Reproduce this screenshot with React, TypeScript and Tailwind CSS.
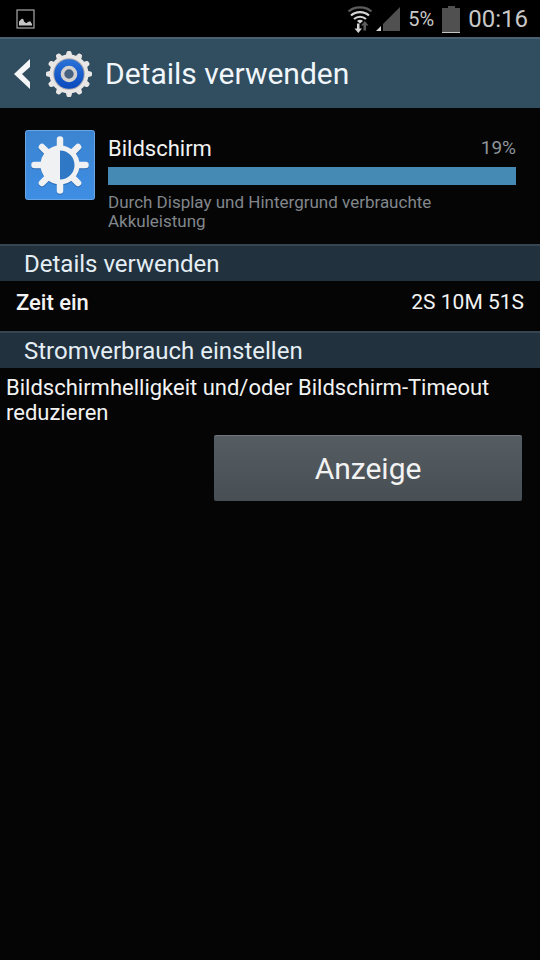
import React from 'react';

interface SectionHeaderProps {
  title: string;
}

const TEETH = [0, 30, 60, 90, 120, 150, 180, 210, 240, 270, 300, 330];
const RAYS = [0, 45, 90, 135, 180, 225, 270, 315];

const PictureIcon = () => (
  <svg className="w-5 h-5" viewBox="0 0 20 20" fill="none">
    <rect x="1" y="1" width="17" height="18" stroke="#a8a8a8" strokeWidth="1.2" />
    <path d="M3 16.500v-4l2-2 1-1 1.500 1 .5 2 2 1.500h1l1-1.500 1 .5 1-1 2 3v1.500z" fill="#c4c4c4" />
  </svg>
);

const WifiIcon = () => (
  <svg className="w-7 h-7" viewBox="0 0 28 28" fill="none">
    <path d="M2.500 6.500c6-5.500 17-5.500 23 0" stroke="#5c5c5c" strokeWidth="2.200" />
    <path d="M5 10.500c5-4.500 13-4.500 18 0" stroke="#d6d6d6" strokeWidth="2.200" />
    <path d="M8 14c3.500-3 8.500-3 12 0" stroke="#d6d6d6" strokeWidth="2.200" />
    <path d="M11 16q3-2.500 6 0l-3 2.500z" fill="#d6d6d6" />
    <path d="M11 18.500h2.500v5h2.500l-3.700 4.500-3.800-4.500H11z" fill="#d6d6d6" />
    <path d="M17.500 25.500v-5H15l3.800-4.500 3.700 4.500H20v5z" fill="#5c5c5c" />
  </svg>
);

const SignalIcon = () => (
  <svg className="w-6 h-6" viewBox="0 0 24 24">
    <path d="M24 0v24H7V17z" fill="#505050" />
    <path d="M5 19v5H0z" fill="#d6d6d6" />
  </svg>
);

const BatteryIcon = () => (
  <svg className="w-[18px] h-7" viewBox="0 0 18 28">
    <path d="M6 1h7v2h5v25H0V3h6z" fill="#505050" />
    <rect y="27" width="18" height="1" fill="#c4c4c4" />
  </svg>
);

const GearIcon = () => (
  <svg className="w-12 h-12" viewBox="0 0 48 48">
    <defs>
      <linearGradient id="gearRing" x1="0" y1="0" x2="0" y2="1">
        <stop offset="0" stopColor="#2a72d8" />
        <stop offset="1" stopColor="#0a49bd" />
      </linearGradient>
    </defs>
    <g fill="#e9e7e5">
      {TEETH.map((angle) => (
        <path key={angle} d="M20.500 7l1-4.500q.3-1.500 1.500-1.500h2q1.200 0 1.500 1.500l1 4.500z" transform={`rotate(${angle} 24 24)`} />
      ))}
      <circle cx="24" cy="24" r="19.500" />
    </g>
    <circle cx="24" cy="24" r="15.800" fill="#a9a9ae" />
    <circle cx="24" cy="24" r="14.800" fill="url(#gearRing)" />
    <circle cx="24" cy="24" r="6.500" fill="#46607f" stroke="#d3d1cf" strokeWidth="3.600" />
  </svg>
);

const BrightnessIcon = () => (
  <svg className="w-[70px] h-[70px] shrink-0" viewBox="0 0 70 70">
    <defs>
      <linearGradient id="tile" x1="0" y1="0" x2="0" y2="1">
        <stop offset="0" stopColor="#3b84d0" />
        <stop offset="1" stopColor="#3e8ee4" />
      </linearGradient>
    </defs>
    <rect x="0.500" y="0.500" width="69" height="69" rx="2" fill="url(#tile)" stroke="#68a6e6" />
    <g transform="translate(0 1)" fill="none" stroke="#1d5596" strokeWidth="6.500" strokeLinecap="round" opacity="0.6">
      {RAYS.map((angle) => (
        <path key={angle} d="M35 9.500v8" transform={`rotate(${angle} 35 35)`} />
      ))}
      <circle cx="35" cy="35" r="17" strokeWidth="5" />
    </g>
    <g stroke="#f0f1f2" strokeWidth="6.500" strokeLinecap="round">
      {RAYS.map((angle) => (
        <path key={angle} d="M35 9.500v8" transform={`rotate(${angle} 35 35)`} />
      ))}
    </g>
    <circle cx="35" cy="35" r="17" fill="#2f78c6" stroke="#f0f1f2" strokeWidth="5" />
    <path d="M35 17a18 18 0 0 0 0 36z" fill="#f0f1f2" />
  </svg>
);

const SectionHeader: React.FC<SectionHeaderProps> = ({ title }) => (
  <h2 className="border-t-2 border-[#36454f] bg-[#21313d] px-6 pt-[2px] pb-px text-2xl leading-8 text-[#e4eef4]">{title}</h2>
);

const App: React.FC = () => {
  return (
    <div className="min-h-screen bg-[#050505] font-['Roboto','Noto_Sans',sans-serif] text-[#f2f2f2]">
      <div className="flex h-[37px] items-center bg-black pl-4 pr-3">
        <PictureIcon />
        <div className="ml-auto flex items-center gap-2 text-[#c8c8c8]">
          <div className="flex items-center gap-[2px]">
            <WifiIcon />
            <SignalIcon />
          </div>
          <span className="text-xl">5%</span>
          <BatteryIcon />
          <span className="text-2xl">00:16</span>
        </div>
      </div>

      <header className="flex h-[71px] items-center border-t-2 border-[#4a6070] bg-[#314d60] pl-3">
        <button type="button" aria-label="Zurück" className="flex items-center">
          <svg className="w-5 h-8" viewBox="0 0 20 32">
            <path d="M18 1v8l-8 7 8 8v7L2 16z" fill="#f4f6f8" />
          </svg>
        </button>
        <span className="ml-[13px]"><GearIcon /></span>
        <h1 className="ml-3 text-[30px] leading-9 text-[#f0f6fa]">Details verwenden</h1>
      </header>

      <main>
        <section className="flex h-[136px] gap-[13px] pl-[25px] pr-6 pt-[22px]">
          <BrightnessIcon />
          <div className="min-w-0 flex-1">
            <div className="flex items-center justify-between">
              <h2 className="text-[22px] leading-[37px]">Bildschirm</h2>
              <span className="text-[19px] text-[#8f959a]">19%</span>
            </div>
            <div className="h-[18px] bg-[#458ab5]" />
            <p className="mt-2 text-[17px] leading-[19px] text-[#81878c]">Durch Display und Hintergrund verbrauchte Akkuleistung</p>
          </div>
        </section>

        <SectionHeader title="Details verwenden" />
        <dl className="flex h-[50px] justify-between px-4 text-[22px] leading-[43px]">
          <dt className="font-medium">Zeit ein</dt>
          <dd className="text-[21px]">2S 10M 51S</dd>
        </dl>

        <SectionHeader title="Stromverbrauch einstellen" />
        <p className="px-[6px] pt-[7px] text-[22px] leading-[25px]">Bildschirmhelligkeit und/oder Bildschirm-Timeout reduzieren</p>
        <div className="flex justify-end pr-[18px] pt-[10px]">
          <button type="button" className="h-[66px] w-[59%] rounded-xs border-t border-[#70767b] bg-linear-to-b from-[#565d62] to-[#484f54] text-[30px]">
            Anzeige
          </button>
        </div>
      </main>
    </div>
  );
};

export default App;
